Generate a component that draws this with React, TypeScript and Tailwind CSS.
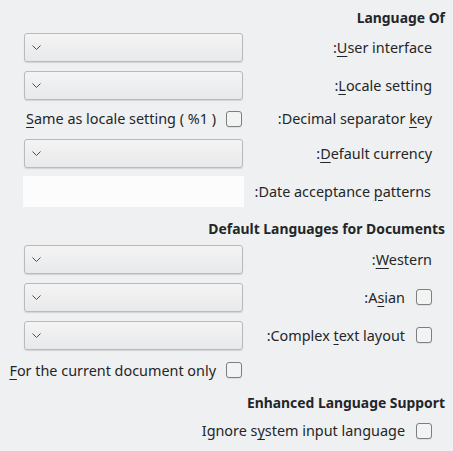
import React from "react";

function Chevron() {
  return (
    <svg width="9" height="5" viewBox="0 0 9 5" className="text-[#4d4f52]">
      <path d="M0.5 0.5 L4.5 4.5 L8.5 0.5" fill="none" stroke="currentColor" strokeWidth="1" />
    </svg>
  );
}

function Combo() {
  return (
    <div className="w-[219px] h-[29px] flex items-center pl-[7px] rounded-[3px] border border-[#b9babb] bg-gradient-to-b from-[#f4f4f5] to-[#e8e9ea] shadow-[0_1px_1px_rgba(0,0,0,0.12)]">
      <Chevron />
    </div>
  );
}

function Check() {
  return (
    <div className="w-[16px] h-[16px] rounded-[3px] border border-[#7c7e80] bg-[#f2f3f3] shadow-[0_1px_1px_rgba(0,0,0,0.08)] shrink-0" />
  );
}

// label with a mnemonic letter underlined
function Mn({ pre, k, post }: { pre: string; k: string; post: string }) {
  return (
    <span className="whitespace-nowrap">
      {pre}
      <u className="underline-offset-[3px]">{k}</u>
      {post}
    </span>
  );
}

function Header({ children, mt }: { children: React.ReactNode; mt: string }) {
  return (
    <div className={`h-[20px] flex items-center justify-end pr-[8px] font-bold text-[13.9px] ${mt}`}>{children}</div>
  );
}

function Row({ left, right, h, mt, leftW = "w-[243px]" }: { left?: React.ReactNode; right?: React.ReactNode; h: string; mt: string; leftW?: string }) {
  return (
    <div className={`flex items-center ${h} ${mt}`}>
      {left && <div className={`${leftW} shrink-0 flex items-center justify-end`}>{left}</div>}
      <div className="flex-1 flex items-center justify-end gap-[11px] pr-[21px]">{right}</div>
    </div>
  );
}

export default function App() {
  return (
    <div
      className="w-[453px] h-[451px] bg-[#eff0f1] text-[#232629] text-[14.4px] pt-[8px] overflow-hidden"
      style={{ fontFamily: '"Noto Sans", "Open Sans", sans-serif' }}
    >
      <Header mt="mt-0">Language Of</Header>
      <Row h="h-[29px]" mt="mt-[5px]" left={<Combo />} right={<Mn pre=":" k="U" post="ser interface" />} />
      <Row h="h-[29px]" mt="mt-[9px]" left={<Combo />} right={<Mn pre=":" k="L" post="ocale setting" />} />
      <Row
        h="h-[26px]"
        mt="mt-[6px]"
        left={
          <div className="flex items-center gap-[10px] pr-[1px]">
            <Mn pre="" k="S" post="ame as locale setting ( %1 )" />
            <Check />
          </div>
        }
        right={<Mn pre=":Decimal separator " k="k" post="ey" />}
      />
      <Row h="h-[29px]" mt="mt-[7px]" left={<Combo />} right={<Mn pre=":" k="D" post="efault currency" />} />
      <Row
        h="h-[31px]"
        mt="mt-[8px]"
        leftW="w-[244px]"
        left={<div className="w-[221px] h-[31px] bg-[#fcfcfc]" />}
        right={
          <span className="pr-[1px]">
            <Mn pre=":Date acceptance " k="p" post="atterns" />
          </span>
        }
      />
      <Header mt="mt-[12px]">Default Languages for Documents</Header>
      <Row h="h-[29px]" mt="mt-[6px]" left={<Combo />} right={<Mn pre=":" k="W" post="estern" />} />
      <Row
        h="h-[29px]"
        mt="mt-[9px]"
        left={<Combo />}
        right={
          <>
            <Mn pre=":A" k="s" post="ian" />
            <Check />
          </>
        }
      />
      <Row
        h="h-[29px]"
        mt="mt-[9px]"
        left={<Combo />}
        right={
          <>
            <Mn pre=":Complex " k="t" post="ext layout" />
            <Check />
          </>
        }
      />
      <Row
        h="h-[25px]"
        mt="mt-[8px]"
        left={
          <div className="flex items-center gap-[10px] pr-[1px]">
            <Mn pre="" k="F" post="or the current document only" />
            <Check />
          </div>
        }
      />
      <Header mt="mt-[10px]">Enhanced Language Support</Header>
      <Row
        h="h-[26px]"
        mt="mt-[5px]"
        right={
          <>
            <Mn pre="Ignore s" k="y" post="stem input language" />
            <Check />
          </>
        }
      />
    </div>
  );
}
